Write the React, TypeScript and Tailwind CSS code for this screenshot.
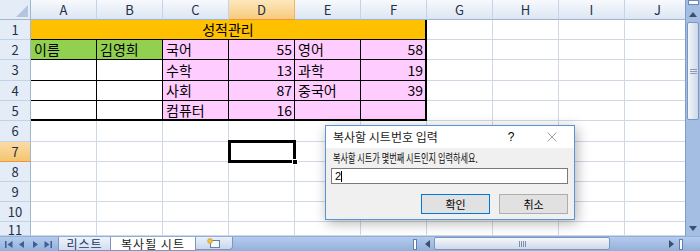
import React from 'react';

const COLS = ['A', 'B', 'C', 'D', 'E', 'F', 'G', 'H', 'I', 'J'];
const ROW_H = ['h-[20px]', 'h-[20px]', 'h-[21px]', 'h-[20px]', 'h-[20px]', 'h-[21px]', 'h-[20px]', 'h-[20px]', 'h-[20px]', 'h-[20px]', 'h-[14px]'];

const GRID = 'w-[66px] shrink-0 border-r border-b border-[#d0d7e5]';
const GREEN = 'bg-[#92d050]';
const PINK = 'bg-[#ffccff]';

type Data = { v: string; num?: boolean; bg: string };

const table: Data[][] = [
  [
    { v: '이름', bg: GREEN },
    { v: '김영희', bg: GREEN },
    { v: '국어', bg: PINK },
    { v: '55', num: true, bg: PINK },
    { v: '영어', bg: PINK },
    { v: '58', num: true, bg: PINK },
  ],
  [
    { v: '', bg: 'bg-white' },
    { v: '', bg: 'bg-white' },
    { v: '수학', bg: PINK },
    { v: '13', num: true, bg: PINK },
    { v: '과학', bg: PINK },
    { v: '19', num: true, bg: PINK },
  ],
  [
    { v: '', bg: 'bg-white' },
    { v: '', bg: 'bg-white' },
    { v: '사회', bg: PINK },
    { v: '87', num: true, bg: PINK },
    { v: '중국어', bg: PINK },
    { v: '39', num: true, bg: PINK },
  ],
  [
    { v: '', bg: 'bg-white' },
    { v: '', bg: 'bg-white' },
    { v: '컴퓨터', bg: PINK },
    { v: '16', num: true, bg: PINK },
    { v: '', bg: PINK },
    { v: '', bg: PINK },
  ],
];

function RowHead({ n, h }: { n: number; h: string }) {
  const active = n === 7;
  return (
    <div
      className={`${h} w-[31px] shrink-0 flex justify-center text-[13px] text-[#1f2f47] border-r border-r-[#9eb6ce] border-b ${
        n === 11 ? 'items-start leading-[16px]' : 'items-center'
      } ${active ? 'bg-gradient-to-b from-[#fbdca6] to-[#f5c56e] border-b-[#f29536]' : 'bg-[#e4ecf7] border-b-[#c3d1e4]'}`}
    >
      {n}
    </div>
  );
}

function TriLeft({ bar }: { bar?: boolean }) {
  return (
    <svg width="8" height="7" viewBox="0 0 8 7">
      {bar && <rect x="0" y="0" width="1.5" height="7" fill="#3f5f93" />}
      <path d={bar ? 'M7.5 0 L2.5 3.5 L7.5 7 Z' : 'M6 0 L1 3.5 L6 7 Z'} fill="#3f5f93" />
    </svg>
  );
}

function TriRight({ bar }: { bar?: boolean }) {
  return (
    <svg width="8" height="7" viewBox="0 0 8 7">
      <path d={bar ? 'M0.5 0 L5.5 3.5 L0.5 7 Z' : 'M2 0 L7 3.5 L2 7 Z'} fill="#3f5f93" />
      {bar && <rect x="6.5" y="0" width="1.5" height="7" fill="#3f5f93" />}
    </svg>
  );
}

function SplitBox() {
  return <div className="w-[4px] h-[11px] bg-white border border-[#5d7fb5]" />;
}

function Sheet() {
  return (
    <div className="relative w-[685px] h-[236px] overflow-hidden bg-white">
      {/* column headers */}
      <div className="flex h-[20px]">
        <div className="w-[31px] shrink-0 h-[20px] border-r border-b border-[#9eb6ce] bg-[#e4ecf7] flex items-end justify-end p-[2px]">
          <svg width="12" height="12" viewBox="0 0 12 12">
            <path d="M12 0 L12 12 L0 12 Z" fill="#b4c5dd" />
          </svg>
        </div>
        {COLS.map((c) => (
          <div
            key={c}
            className={`w-[66px] shrink-0 h-[20px] flex items-center justify-center text-[13px] text-[#1f2f47] border-b border-r ${
              c === 'D'
                ? 'bg-gradient-to-b from-[#fde7bd] to-[#f7cb7d] border-b-[#f29536] border-r-[#f2b458]'
                : 'bg-gradient-to-b from-[#f7f9fd] to-[#dce6f3] border-b-[#9eb6ce] border-r-[#c5d3e6]'
            }`}
          >
            {c}
          </div>
        ))}
      </div>

      {/* row 1 */}
      <div className="flex">
        <RowHead n={1} h={ROW_H[0]} />
        <div className="h-[20px] w-[396px] shrink-0 bg-[#ffc000] border-b border-b-black border-r-2 border-r-black flex items-center justify-center text-[14px] text-black">
          성적관리
        </div>
        {COLS.slice(6).map((c) => (
          <div key={c} className={`${GRID} h-[20px]`} />
        ))}
      </div>

      {/* rows 2-5 */}
      {table.map((row, ri) => (
        <div key={ri} className="flex">
          <RowHead n={ri + 2} h={ROW_H[ri + 1]} />
          {row.map((cell, ci) => (
            <div
              key={ci}
              className={`${ROW_H[ri + 1]} w-[66px] shrink-0 ${cell.bg} ${
                ci === 5 ? 'border-r-2' : 'border-r'
              } ${ri === 3 ? 'border-b-2' : 'border-b'} border-black flex items-center text-[14px] text-black ${
                cell.num ? 'justify-end pr-[2px]' : 'pl-[3px]'
              }`}
            >
              {cell.v}
            </div>
          ))}
          {COLS.slice(6).map((c) => (
            <div key={c} className={`${GRID} ${ROW_H[ri + 1]}`} />
          ))}
        </div>
      ))}

      {/* rows 6-11 */}
      {[6, 7, 8, 9, 10, 11].map((n) => (
        <div key={n} className="flex">
          <RowHead n={n} h={ROW_H[n - 1]} />
          {COLS.map((c) => (
            <div key={c} className={`${GRID} ${ROW_H[n - 1]}`} />
          ))}
        </div>
      ))}

      {/* active cell D7 */}
      <div className="absolute left-[228px] top-[140px] w-[68px] h-[23px] border-[3px] border-black" />
      <div className="absolute left-[292px] top-[159px] w-[6px] h-[6px] bg-black border border-white" />
    </div>
  );
}

function VScroll() {
  return (
    <div className="w-[15px] h-[236px] flex flex-col bg-[#a3bde3] border-l border-[#7f9dcb]">
      <div className="h-[6px] flex justify-center items-start">
        <div className="w-[11px] h-[5px] bg-white border border-[#6888bb]" />
      </div>
      <div className="h-[16px] flex items-center justify-center">
        <svg width="8" height="5" viewBox="0 0 8 5">
          <path d="M0 5 L4 0 L8 5 Z" fill="#3e4f6b" />
        </svg>
      </div>
      <div className="h-[98px] mx-[1px] rounded-[2px] border border-[#7b96c0] bg-gradient-to-r from-[#f3f6fb] to-[#cdd8e8] flex flex-col items-center justify-center gap-[1px]">
        <div className="w-[7px] h-[1px] bg-[#8a9cb8]" />
        <div className="w-[7px] h-[1px] bg-[#8a9cb8]" />
        <div className="w-[7px] h-[1px] bg-[#8a9cb8]" />
      </div>
      <div className="flex-1" />
      <div className="h-[16px] flex items-center justify-center">
        <svg width="8" height="5" viewBox="0 0 8 5">
          <path d="M0 0 L8 0 L4 5 Z" fill="#3e4f6b" />
        </svg>
      </div>
    </div>
  );
}

function BottomBar() {
  return (
    <div className="h-[15px] flex bg-gradient-to-b from-[#b4cbec] to-[#93b0dc] border-t border-[#8faed9]">
      <div className="w-[57px] flex items-center justify-around px-[3px]">
        <TriLeft bar />
        <TriLeft />
        <TriRight />
        <TriRight bar />
      </div>
      <div className="w-[1px]" />
      <div className="w-[53px] h-[14px] flex items-center justify-center bg-gradient-to-b from-[#eef3fa] to-[#d2def0] border border-t-0 border-[#7d95bf] text-[12px] text-[#1d3763] leading-none tracking-[1px]">
        리스트
      </div>
      <div className="w-[85px] h-[14px] flex items-center justify-center bg-white border-b border-r border-[#7d95bf] text-[12px] text-[#222] leading-none tracking-[1px]">
        복사될 시트
      </div>
      <div className="w-[37px] h-[13px] flex items-center justify-center bg-gradient-to-b from-[#e9f0f9] to-[#c9d7ec] border-b border-r border-[#7d95bf] rounded-br-[4px]">
        <svg width="14" height="10" viewBox="0 0 14 10">
          <rect x="3.5" y="2.5" width="9" height="7" fill="#f4f7fb" stroke="#6d7f99" />
          <circle cx="3" cy="3" r="2.4" fill="#f5c242" stroke="#c48a1d" strokeWidth="0.6" />
        </svg>
      </div>
      <div className="w-[180px]" />
      <div className="w-[4px] flex items-center">
        <SplitBox />
      </div>
      <div className="w-[5px]" />
      <div className="w-[10px] flex items-center justify-center">
        <svg width="5" height="8" viewBox="0 0 5 8">
          <path d="M5 0 L0 4 L5 8 Z" fill="#3e4f6b" />
        </svg>
      </div>
      <div className="w-[2px]" />
      <div className="w-[176px] h-[13px] rounded-[2px] border border-[#7b96c0] bg-gradient-to-b from-[#f7f9fc] to-[#cdd8e8] flex items-center justify-center gap-[1px]">
        <div className="w-[1px] h-[6px] bg-[#7d8fab]" />
        <div className="w-[1px] h-[6px] bg-[#7d8fab]" />
        <div className="w-[1px] h-[6px] bg-[#7d8fab]" />
        <div className="w-[1px] h-[6px] bg-[#7d8fab]" />
      </div>
      <div className="w-[56px]" />
      <div className="w-[10px] flex items-center justify-center">
        <svg width="5" height="8" viewBox="0 0 5 8">
          <path d="M0 0 L5 4 L0 8 Z" fill="#3e4f6b" />
        </svg>
      </div>
      <div className="w-[3px]" />
      <div className="w-[4px] flex items-center">
        <SplitBox />
      </div>
      <div className="w-[17px]" />
    </div>
  );
}

function Dialog() {
  return (
    <div className="absolute left-[325px] top-[125px] w-[250px] h-[95px] bg-[#f0f0f0] border border-[#5b93d3] shadow-[2px_3px_12px_rgba(0,0,0,0.3)] flex flex-col">
      <div className="h-[22px] bg-white flex items-center">
        <span className="pl-[7px] text-[12px] text-[#222] whitespace-nowrap">복사할 시트번호 입력</span>
        <div className="ml-auto w-[38px] h-[22px] flex items-center justify-center text-[12px] text-black font-['Liberation_Sans',sans-serif]">
          ?
        </div>
        <div className="w-[44px] h-[22px] flex items-center justify-center">
          <svg width="10" height="10" viewBox="0 0 10 10">
            <path d="M0.5 0.5 L9.5 9.5 M9.5 0.5 L0.5 9.5" stroke="#a0a0a0" strokeWidth="1" />
          </svg>
        </div>
      </div>
      <div className="flex flex-col pl-[5px] pr-[6px] pt-[4px]">
        <div className="h-[12px] leading-[12px] pl-[2px] text-[12px] text-[#111] whitespace-nowrap">
          <span className="inline-block origin-left scale-x-[0.68]">복사할 시트가 몇번째 시트인지 입력하세요.</span>
        </div>
        <div className="mt-[4px] h-[16px] bg-white border border-[#7a7a7a] flex items-center pl-[3px]">
          <span className="text-[11px] leading-none text-black font-['Liberation_Sans',sans-serif]">2</span>
          <div className="w-[1px] h-[11px] bg-black" />
        </div>
        <div className="mt-[10px] flex justify-end gap-[9px]">
          <div className="w-[69px] h-[20px] bg-[#e1e1e1] border border-[#0078d7] flex items-center justify-center text-[11px] text-black">
            확인
          </div>
          <div className="w-[69px] h-[20px] bg-[#e1e1e1] border border-[#adadad] flex items-center justify-center text-[11px] text-black">
            취소
          </div>
        </div>
      </div>
    </div>
  );
}

export default function App() {
  return (
    <div className="relative w-[700px] h-[251px] overflow-hidden bg-white font-['Noto_Sans_CJK_KR','Noto_Sans',sans-serif]">
      <div className="flex h-[236px]">
        <Sheet />
        <VScroll />
      </div>
      <BottomBar />
      <Dialog />
    </div>
  );
}
